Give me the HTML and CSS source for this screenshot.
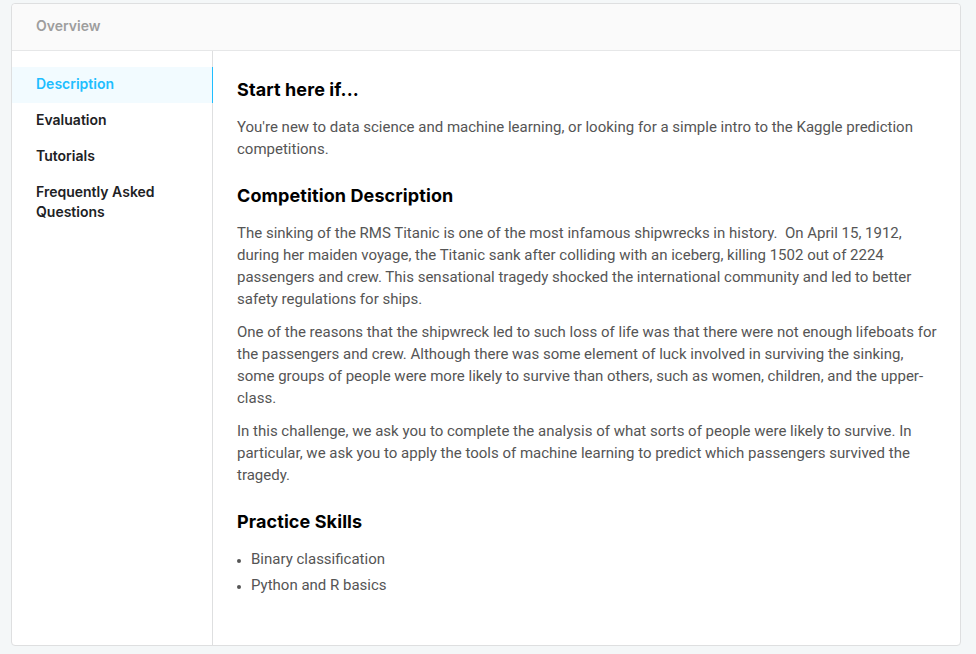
FILE: index.html
```html
<!DOCTYPE html>
<html>
<head>
<meta charset="utf-8">
<link rel="stylesheet" href="styles.css">
</head>
<body>
<div class="card">
  <div class="card-header">Overview</div>
  <div class="card-body">
    <nav class="sidebar">
      <a class="nav-item active">Description</a>
      <a class="nav-item">Evaluation</a>
      <a class="nav-item">Tutorials</a>
      <a class="nav-item">Frequently Asked Questions</a>
    </nav>
    <main class="content">
      <h2>Start here if...</h2>
      <p>You're new to data science and machine learning, or looking for a simple intro to the Kaggle prediction competitions.</p>
      <h2>Competition Description</h2>
      <p>The sinking of the RMS Titanic is one of the most infamous shipwrecks in history.&nbsp; On April 15, 1912, during her maiden voyage, the Titanic sank after colliding with an iceberg, killing 1502 out of 2224 passengers and crew. This sensational tragedy shocked the international community and led to better safety regulations for ships.</p>
      <p>One of the reasons that the shipwreck led to such loss of life was that there were not enough lifeboats for the passengers and crew. Although there was some element of luck involved in surviving the sinking, some groups of people were more likely to survive than others, such as women, children, and the upper-class.</p>
      <p>In this challenge, we ask you to complete the analysis of what sorts of people were likely to survive. In particular, we ask you to apply the tools of machine learning to predict which passengers survived the tragedy.</p>
      <h2>Practice Skills</h2>
      <ul>
        <li>Binary classification</li>
        <li>Python and R basics</li>
      </ul>
    </main>
  </div>
</div>
</body>
</html>
```
FILE: styles.css
```css
html, body {
  margin: 0;
  padding: 0;
  background: #f4f7f8;
}
body {
  padding: 3px 15px 9px 11px;
  font-family: Roboto, "Liberation Sans", sans-serif;
}
.card {
  border: 1px solid #dedfe0;
  border-radius: 4px;
  background: #fff;
  display: flex;
  flex-direction: column;
  box-sizing: border-box;
  height: 643px;
}
.card-header {
  background: #fafafa;
  border-bottom: 1px solid #e6e7e8;
  border-radius: 4px 4px 0 0;
  height: 47px;
  box-sizing: border-box;
  padding: 12px 24px 0 24px;
  font-family: Inter, "Liberation Sans", sans-serif;
  font-size: 14px;
  font-weight: 600;
  color: #9e9e9e;
  line-height: 20px;
}
.card-body {
  flex: 1;
  display: flex;
}
.sidebar {
  width: 200px;
  border-right: 1px solid #dedfe0;
  padding-top: 16px;
  display: flex;
  flex-direction: column;
}
.nav-item {
  display: block;
  padding: 7px 24px 9px 24px;
  font-family: Inter, "Liberation Sans", sans-serif;
  font-size: 14px;
  font-weight: 600;
  line-height: 20px;
  color: #202124;
  margin-right: -1px;
}
.nav-item.active {
  background: #f2fbff;
  color: #20beff;
  border-right: 1px solid #20beff;
}
.content {
  flex: 1;
  padding: 25px 20px 0 24px;
}
.content h2 {
  font-family: Inter, "Liberation Sans", sans-serif;
  font-size: 18px;
  font-weight: 700;
  color: #000;
  margin: 0 0 12px 0;
  line-height: 28px;
  letter-spacing: 0.1px;
}
.content p {
  margin: 0 0 11px 0;
  font-size: 15px;
  line-height: 22px;
  color: #555;
}
.content p + h2 {
  margin-top: 22px;
}
.content ul {
  margin: 0;
  padding-left: 14px;
  font-size: 15px;
  color: #555;
}
.content li {
  line-height: 22px;
  margin-bottom: 4px;
}
.content li::marker {
  font-size: 12px;
}
```
